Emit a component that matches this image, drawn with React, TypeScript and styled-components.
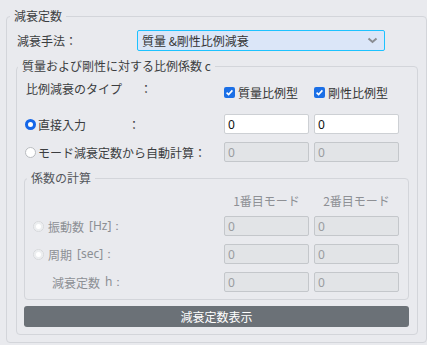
import styled, { createGlobalStyle } from 'styled-components';

const GlobalStyle = createGlobalStyle`
    html, body {
        margin: 0;
        padding: 0;
        background: #e9eaee;
    }
    body {
        font-family: 'Noto Sans CJK JP', 'Noto Sans', sans-serif;
        font-size: 12px;
        color: #3b3d40;
    }
`;

const Page = styled.div`
    width: 427px;
    height: 345px;
    box-sizing: border-box;
    padding: 8px 0 0 6px;
`;

const Group = styled.fieldset<{ $pad: string }>`
    margin: 0;
    padding: ${(p) => p.$pad};
    border: 1px solid #d3d5da;
    border-radius: 4px;
    min-width: 0;
`;

const Legend = styled.legend<{ $muted?: boolean }>`
    padding: 0 4px;
    margin-left: -6px;
    line-height: 16px;
    font-size: 12px;
    color: ${(p) => (p.$muted ? '#54575c' : '#3b3d40')};
`;

const MethodRow = styled.div`
    display: flex;
    align-items: center;
    height: 21px;
`;

const MethodLabel = styled.span`
    width: 121px;
    padding-left: 1px;
    box-sizing: border-box;
`;

const SelectBox = styled.div`
    width: 248px;
    height: 21px;
    box-sizing: border-box;
    display: flex;
    align-items: center;
    justify-content: space-between;
    padding: 0 6px 0 4px;
    background: #dbe6f8;
    border: 1px solid #1dc2ff;
    border-radius: 2px;
    color: #333;
`;

const Grid = styled.div<{ $label: number }>`
    display: grid;
    grid-template-columns: ${(p) => p.$label}px 85px 85px;
    column-gap: 5px;
    row-gap: 8px;
    align-items: center;
`;

const TopLabel = styled.span`
    align-self: start;
    line-height: 17px;
    padding-left: 2px;
`;

const CheckLabel = styled.label`
    align-self: start;
    margin: 4px 0 5px;
    display: flex;
    align-items: center;
    gap: 3px;
    line-height: 17px;
    color: #333;
`;

const CheckBox = styled.span`
    width: 11px;
    height: 11px;
    border-radius: 2px;
    background: #1b6fe6;
    display: flex;
    align-items: center;
    justify-content: center;
`;

const Choice = styled.label<{ $disabled?: boolean; $indent?: number }>`
    display: flex;
    align-items: center;
    gap: 2px;
    height: 20px;
    padding-left: ${(p) => p.$indent ?? 1}px;
    color: ${(p) => (p.$disabled ? '#8c8f94' : '#3b3d40')};
    white-space: nowrap;
`;

const Radio = styled.span<{ $checked?: boolean; $disabled?: boolean }>`
    width: 11px;
    height: 11px;
    box-sizing: border-box;
    border-radius: 50%;
    background: #fff;
    border: ${(p) =>
        p.$checked ? '3px solid #1466e8' : `1px solid ${p.$disabled ? '#d6d8db' : '#b9bcc0'}`};
    box-shadow: ${(p) => (p.$disabled ? 'inset 0 0 0 2px #eceef0' : 'none')};
    margin-right: ${(p) => (p.$disabled ? 2 : 0)}px;
`;

const Colon = styled.span<{ $gap?: number }>`
    margin-left: ${(p) => p.$gap ?? 0}px;
`;

const Field = styled.input<{ $off?: boolean }>`
    width: 85px;
    height: 20px;
    box-sizing: border-box;
    margin: 0;
    padding: 0 3px;
    font-family: 'Noto Sans', 'Noto Sans CJK JP', sans-serif;
    font-size: 12px;
    border-radius: 2px;
    outline: none;
    border: 1px solid ${(p) => (p.$off ? '#c4c7cb' : '#cdd0d4')};
    background: ${(p) => (p.$off ? '#e2e4e7' : '#ffffff')};
    color: ${(p) => (p.$off ? '#9a9ca0' : '#111')};
    -webkit-text-fill-color: ${(p) => (p.$off ? '#9a9ca0' : '#111')};
    opacity: 1;
`;

const SubGroup = styled(Group)`
    margin-top: 8px;
`;

const Header = styled.span`
    text-align: center;
    color: #8e9095;
    height: 20px;
    line-height: 20px;
`;

const HeaderRow = styled(Grid)`
    margin-bottom: 5px;
`;

const Unit = styled.span`
    font-family: 'Noto Sans', sans-serif;
    margin-left: 3px;
`;

const ShowButton = styled.button`
    display: block;
    width: 100%;
    height: 21px;
    margin-top: 6px;
    padding: 0;
    border: none;
    border-radius: 3px;
    background: #6b7177;
    color: #fff;
    font-family: 'Noto Sans CJK JP', sans-serif;
    font-size: 12px;
`;

const Chevron = () => (
    <svg width="11" height="7" viewBox="0 0 11 7">
        <path d="M1.5 1.5 L5.5 5 L9.5 1.5" fill="none" stroke="#8a8d92" strokeWidth="2" />
    </svg>
);

const Check = () => (
    <svg width="9" height="9" viewBox="0 0 9 9">
        <path d="M1.6 4.6 L3.6 6.5 L7.4 2.4" fill="none" stroke="#fff" strokeWidth="1.6" />
    </svg>
);

export default function App() {
    return (
        <Page>
            <GlobalStyle />
            <Group $pad="6px 8px 7px 9px">
                <Legend>減衰定数</Legend>
                <MethodRow>
                    <MethodLabel>減衰手法：</MethodLabel>
                    <SelectBox>
                        <span>質量 &amp;剛性比例減衰</span>
                        <Chevron />
                    </SelectBox>
                </MethodRow>

                <Group $pad="6px 8px 7px 7px" style={{ marginTop: 7 }}>
                    <Legend>質量および剛性に対する比例係数 c</Legend>
                    <Grid $label={195}>
                        <TopLabel>
                            比例減衰のタイプ<Colon $gap={18}>：</Colon>
                        </TopLabel>
                        <CheckLabel>
                            <CheckBox><Check /></CheckBox>質量比例型
                        </CheckLabel>
                        <CheckLabel>
                            <CheckBox><Check /></CheckBox>剛性比例型
                        </CheckLabel>

                        <Choice>
                            <Radio $checked />直接入力<Colon $gap={40}>：</Colon>
                        </Choice>
                        <Field defaultValue="0" />
                        <Field defaultValue="0" />

                        <Choice>
                            <Radio />モード減衰定数から自動計算：
                        </Choice>
                        <Field $off disabled value="0" readOnly />
                        <Field $off disabled value="0" readOnly />
                    </Grid>

                    <SubGroup $pad="5px 9px 7px 8px">
                        <Legend $muted>係数の計算</Legend>
                        <HeaderRow $label={186}>
                            <span />
                            <Header>1番目モード</Header>
                            <Header>2番目モード</Header>
                        </HeaderRow>
                        <Grid $label={186}>
                            <Choice $disabled $indent={0}>
                                <Radio $disabled />振動数<Unit>[Hz]：</Unit>
                            </Choice>
                            <Field $off disabled value="0" readOnly />
                            <Field $off disabled value="0" readOnly />

                            <Choice $disabled $indent={0}>
                                <Radio $disabled />周期<Unit>[sec]：</Unit>
                            </Choice>
                            <Field $off disabled value="0" readOnly />
                            <Field $off disabled value="0" readOnly />

                            <Choice $disabled $indent={19}>
                                減衰定数<Unit>h：</Unit>
                            </Choice>
                            <Field $off disabled value="0" readOnly />
                            <Field $off disabled value="0" readOnly />
                        </Grid>
                    </SubGroup>
                    <ShowButton>減衰定数表示</ShowButton>
                </Group>
            </Group>
        </Page>
    );
}
